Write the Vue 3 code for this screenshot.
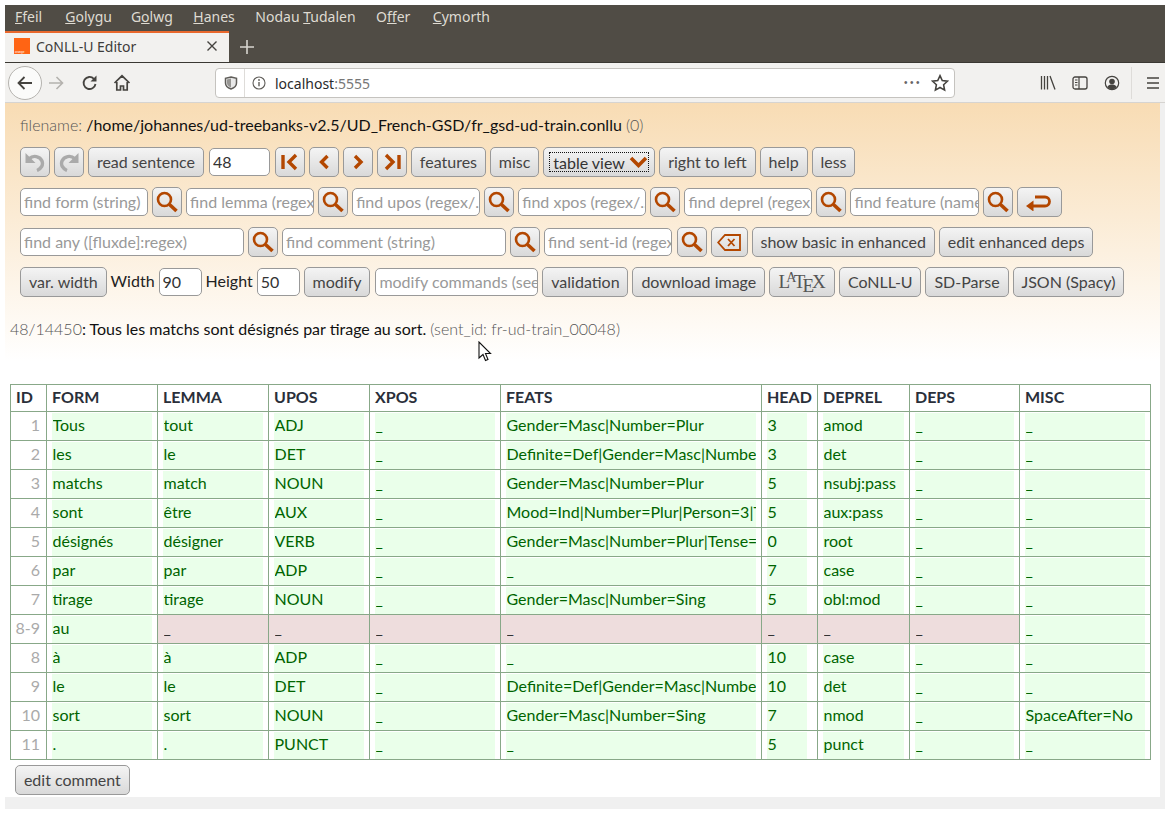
<script setup>
const headers = ['ID', 'FORM', 'LEMMA', 'UPOS', 'XPOS', 'FEATS', 'HEAD', 'DEPREL', 'DEPS', 'MISC']
const widths = [36, 111, 111, 101, 131, 261, 56, 92, 110, 131]
const rows = [
  ['1', 'Tous', 'tout', 'ADJ', '_', 'Gender=Masc|Number=Plur', '3', 'amod', '_', '_'],
  ['2', 'les', 'le', 'DET', '_', 'Definite=Def|Gender=Masc|Number=Plur|PronType=Art', '3', 'det', '_', '_'],
  ['3', 'matchs', 'match', 'NOUN', '_', 'Gender=Masc|Number=Plur', '5', 'nsubj:pass', '_', '_'],
  ['4', 'sont', 'être', 'AUX', '_', 'Mood=Ind|Number=Plur|Person=3|Tense=Pres|VerbForm=Fin', '5', 'aux:pass', '_', '_'],
  ['5', 'désignés', 'désigner', 'VERB', '_', 'Gender=Masc|Number=Plur|Tense=Past|VerbForm=Part|Voice=Pass', '0', 'root', '_', '_'],
  ['6', 'par', 'par', 'ADP', '_', '_', '7', 'case', '_', '_'],
  ['7', 'tirage', 'tirage', 'NOUN', '_', 'Gender=Masc|Number=Sing', '5', 'obl:mod', '_', '_'],
  ['8-9', 'au', '_', '_', '_', '_', '_', '_', '_', '_'],
  ['8', 'à', 'à', 'ADP', '_', '_', '10', 'case', '_', '_'],
  ['9', 'le', 'le', 'DET', '_', 'Definite=Def|Gender=Masc|Number=Plur|PronType=Art', '10', 'det', '_', '_'],
  ['10', 'sort', 'sort', 'NOUN', '_', 'Gender=Masc|Number=Sing', '7', 'nmod', '_', 'SpaceAfter=No'],
  ['11', '.', '.', 'PUNCT', '_', '_', '5', 'punct', '_', '_'],
]
function isPink(row, i) {
  return row[0] === '8-9' && i >= 2 && i <= 8
}
</script>

<template>
  <div class="window">
    <div class="menubar">
      <span class="mi"><u>F</u>feil</span>
      <span class="mi"><u>G</u>olygu</span>
      <span class="mi">G<u>o</u>lwg</span>
      <span class="mi"><u>H</u>anes</span>
      <span class="mi">Nodau <u>T</u>udalen</span>
      <span class="mi">O<u>f</u>fer</span>
      <span class="mi"><u>C</u>ymorth</span>
    </div>

    <div class="tabbar">
      <div class="tab">
        <svg class="favicon" width="16" height="16" viewBox="0 0 16 16">
          <rect width="16" height="16" fill="#ff6414" />
          <text x="1" y="14.5" font-size="3" fill="#fff" font-family="Liberation Sans">orange</text>
        </svg>
        <span class="tabtitle">CoNLL-U Editor</span>
        <svg class="tabclose" width="12" height="12" viewBox="0 0 12 12">
          <path d="M1.5 1.5l9 9M10.5 1.5l-9 9" stroke="#45433f" stroke-width="1.4" fill="none" />
        </svg>
      </div>
      <svg class="newtab" width="16" height="16" viewBox="0 0 16 16">
        <path d="M8 1v14M1 8h14" stroke="#d8d5cf" stroke-width="1.6" fill="none" />
      </svg>
    </div>

    <div class="toolbar">
      <div class="backbtn">
        <svg width="18" height="18" viewBox="0 0 18 18">
          <path d="M16 9H3M8.5 3L2.500 9l6 6" stroke="#45433f" stroke-width="1.800" fill="none" />
        </svg>
      </div>
      <svg class="tool fwd" width="18" height="18" viewBox="0 0 18 18">
        <path d="M2 9h13M9.500 3l6 6-6 6" stroke="#b4b2ae" stroke-width="1.600" fill="none" />
      </svg>
      <svg class="tool reload" width="18" height="18" viewBox="0 0 18 18">
        <path d="M14.500 10a6 6 0 1 1-1.600-5.200" stroke="#45433f" stroke-width="1.800" fill="none" />
        <path d="M15.500 1.500v6h-6z" fill="#45433f" />
      </svg>
      <svg class="tool home" width="18" height="18" viewBox="0 0 18 18">
        <path d="M1.500 9L9 1.800 16.500 9M3.800 8v8h3.700v-4h3v4h3.700V8" stroke="#45433f" stroke-width="1.700" fill="none" />
      </svg>
      <div class="urlbar">
        <svg class="shield" width="14" height="14" viewBox="0 0 14 14">
          <path d="M7 1l5.500 1.300V7c0 3-2.400 5-5.500 6C3.900 12 1.500 10 1.500 7V2.300z" stroke="#5f5d59" stroke-width="1.500" fill="#e8e8e8" />
          <path d="M7 2.500V11.500C4.800 10.800 3 9.300 3 7V3.400z" fill="#5f5d59" opacity=".6" />
        </svg>
        <span class="urlsep"></span>
        <svg class="info" width="14" height="14" viewBox="0 0 14 14">
          <circle cx="7" cy="7" r="6" stroke="#5f5d59" stroke-width="1.100" fill="none" />
          <path d="M7 6v4.200" stroke="#5f5d59" stroke-width="1.400" />
          <circle cx="7" cy="4" r=".9" fill="#5f5d59" />
        </svg>
        <span class="host">localhost<span class="port">:5555</span></span>
        <span class="dots">•••</span>
        <svg class="star" width="18" height="18" viewBox="0 0 16 16">
          <path d="M8 1.500l2 4.300 4.600.6-3.400 3.200.9 4.700L8 12l-4.100 2.300.9-4.700L1.400 6.400 6 5.800z" stroke="#45433f" stroke-width="1.400" fill="none" />
        </svg>
      </div>
      <div class="righttools">
        <svg width="16" height="16" viewBox="0 0 16 16">
          <path d="M1.500 1v13.500M4.500 1v13.500M7.500 1v13.500M10 1l5 13.500" stroke="#45433f" stroke-width="1.300" fill="none" />
        </svg>
        <svg width="16" height="16" viewBox="0 0 16 16">
          <rect x="1" y="2" width="14" height="12" rx="2" stroke="#45433f" stroke-width="1.300" fill="none" />
          <path d="M7 2v12M3 5h2.500M3 7.500h2.500M3 10h2.500" stroke="#45433f" stroke-width="1.200" />
        </svg>
        <svg width="16" height="16" viewBox="0 0 16 16">
          <circle cx="8" cy="8" r="6.700" stroke="#45433f" stroke-width="1.200" fill="none" />
          <circle cx="8" cy="6.500" r="2.800" fill="#45433f" />
          <path d="M3.300 12c1-2 3-2.500 4.700-2.500s3.700.5 4.700 2.500a6 6 0 0 1-9.400 0z" fill="#45433f" />
        </svg>
        <span class="toolsep"></span>
        <svg class="burger" width="14" height="14" viewBox="0 0 14 14">
          <path d="M1 2h12M1 7h12M1 12h12" stroke="#45433f" stroke-width="1.500" fill="none" />
        </svg>
      </div>
    </div>

    <div class="viewport">
      <div class="page">
        <div class="head">
          <div class="filename"><span class="dim">filename:</span> /home/johannes/ud-treebanks-v2.5/UD_French-GSD/fr_gsd-ud-train.conllu <span class="dim">(0)</span></div>

          <div class="row">
            <button class="btn icon">
              <svg width="22" height="20" viewBox="0 0 22 20"><path d="M1.500 1v10h10z" fill="#aaa" /><path d="M5.500 6.500C9 3 16 4 18 9c1.500 4-1 8-5 9.500" stroke="#aaa" stroke-width="3.400" fill="none" /></svg>
            </button>
            <button class="btn icon">
              <svg width="22" height="20" viewBox="0 0 22 20"><path d="M20.500 1v10h-10z" fill="#aaa" /><path d="M16.500 6.500C13 3 6 4 4 9c-1.500 4 1 8 5 9.500" stroke="#aaa" stroke-width="3.400" fill="none" /></svg>
            </button>
            <button class="btn">read sentence</button>
            <input class="field num48" value="48" />
            <button class="btn icon">
              <svg width="20" height="18" viewBox="0 0 20 18"><path d="M3 2v14" stroke="#b34700" stroke-width="3.400" fill="none" /><path d="M16 2L9 9l7 7" stroke="#b34700" stroke-width="3.400" fill="none" /></svg>
            </button>
            <button class="btn icon">
              <svg width="20" height="18" viewBox="0 0 20 18"><path d="M13.500 3l-6 6 6 6" stroke="#b34700" stroke-width="3.400" fill="none" /></svg>
            </button>
            <button class="btn icon">
              <svg width="20" height="18" viewBox="0 0 20 18"><path d="M7 3l6 6-6 6" stroke="#b34700" stroke-width="3.400" fill="none" /></svg>
            </button>
            <button class="btn icon">
              <svg width="20" height="18" viewBox="0 0 20 18"><path d="M4 2l7 7-7 7" stroke="#b34700" stroke-width="3.400" fill="none" /><path d="M17 2v14" stroke="#b34700" stroke-width="3.400" fill="none" /></svg>
            </button>
            <button class="btn">features</button>
            <button class="btn">misc</button>
            <button class="btn selectbtn">
              <span class="focusbox">table view
                <svg width="19" height="12" viewBox="0 0 19 12"><path d="M2 2l7.500 7.500L17 2" stroke="#b34700" stroke-width="3.600" fill="none" /></svg>
              </span>
            </button>
            <button class="btn">right to left</button>
            <button class="btn">help</button>
            <button class="btn">less</button>
          </div>

          <div class="row">
            <template v-for="p in ['find form (string)', 'find lemma (regex/...)', 'find upos (regex/...)', 'find xpos (regex/...)', 'find deprel (regex/...)', 'find feature (name=...)']" :key="p">
              <input class="field find" :placeholder="p" />
              <button class="btn icon">
                <svg width="24" height="24" viewBox="0 0 24 24"><circle cx="9.500" cy="9.500" r="6.500" stroke="#b34700" stroke-width="2.600" fill="none" /><path d="M14.500 14.500l7 6.500" stroke="#b34700" stroke-width="3.600" fill="none" /></svg>
              </button>
            </template>
            <button class="btn returnbtn">
              <svg width="28" height="18" viewBox="0 0 28 18"><path d="M6.500 13H20a4.500 4.500 0 0 0 0-9H10" stroke="#b34700" stroke-width="2.800" fill="none" /><path d="M1 13l7.500-5.500v11z" fill="#b34700" /></svg>
            </button>
          </div>

          <div class="row">
            <input class="field wide" placeholder="find any ([fluxde]:regex)" />
            <button class="btn icon">
              <svg width="24" height="24" viewBox="0 0 24 24"><circle cx="9.500" cy="9.500" r="6.500" stroke="#b34700" stroke-width="2.600" fill="none" /><path d="M14.500 14.500l7 6.500" stroke="#b34700" stroke-width="3.600" fill="none" /></svg>
            </button>
            <input class="field wide" placeholder="find comment (string)" />
            <button class="btn icon">
              <svg width="24" height="24" viewBox="0 0 24 24"><circle cx="9.500" cy="9.500" r="6.500" stroke="#b34700" stroke-width="2.600" fill="none" /><path d="M14.500 14.500l7 6.500" stroke="#b34700" stroke-width="3.600" fill="none" /></svg>
            </button>
            <input class="field find" placeholder="find sent-id (regex/...)" />
            <button class="btn icon gapl">
              <svg width="24" height="24" viewBox="0 0 24 24"><circle cx="9.500" cy="9.500" r="6.500" stroke="#b34700" stroke-width="2.600" fill="none" /><path d="M14.500 14.500l7 6.500" stroke="#b34700" stroke-width="3.600" fill="none" /></svg>
            </button>
            <button class="btn clearbtn">
              <svg width="24" height="17" viewBox="0 0 24 17"><path d="M8 1h15v15H8L1.200 8.500z" stroke="#b34700" stroke-width="1.800" fill="none" /><path d="M11 5l6.500 7M17.500 5L11 12" stroke="#b34700" stroke-width="1.800" fill="none" /></svg>
            </button>
            <button class="btn">show basic in enhanced</button>
            <button class="btn">edit enhanced deps</button>
          </div>

          <div class="row">
            <button class="btn">var. width</button>
            <span class="lbl">Width</span>
            <input class="field small" value="90" />
            <span class="lbl">Height</span>
            <input class="field small" value="50" />
            <button class="btn">modify</button>
            <input class="field cmd" placeholder="modify commands (see help)" />
            <button class="btn">validation</button>
            <button class="btn">download image</button>
            <button class="btn latex">L<span class="la">A</span>T<span class="le">E</span>X</button>
            <button class="btn">CoNLL-U</button>
            <button class="btn">SD-Parse</button>
            <button class="btn">JSON (Spacy)</button>
          </div>

          <div class="sentence"><span class="dim">48/14450</span>: Tous les matchs sont désignés par tirage au sort. <span class="dim">(sent_id: fr-ud-train_00048)</span></div>

          <svg class="cursor" width="14" height="21" viewBox="0 0 14 21">
            <path d="M1 1v16l4-3.500 2.500 6 2.500-1-2.500-6h5z" fill="#fff" stroke="#111" stroke-width="1.100" />
          </svg>
        </div>

        <table class="tbl">
          <colgroup>
            <col v-for="(w, i) in widths" :key="i" :style="{ width: w + 'px' }" />
          </colgroup>
          <thead>
            <tr><th v-for="h in headers" :key="h">{{ h }}</th></tr>
          </thead>
          <tbody>
            <tr v-for="r in rows" :key="r[0]">
              <td class="idc">{{ r[0] }}</td>
              <td v-for="(c, i) in r.slice(1)" :key="i" :class="{ headc: i === 5, pinkc: isPink(r, i + 1) }">
                <input class="cell" :class="{ pink: isPink(r, i + 1) }" :value="c" readonly />
              </td>
            </tr>
          </tbody>
        </table>

        <button class="btn editc">edit comment</button>
      </div>
      <div class="vscroll"></div>
    </div>
    <div class="hscroll"></div>
  </div>
</template>

<style>
html, body { margin: 0; background: #fff; }
</style>

<style scoped>
.window {
  width: 1160px;
  height: 804px;
  margin: 5px 0 0 5px;
  display: flex;
  flex-direction: column;
  font-family: Lato, "Liberation Sans", sans-serif;
  overflow: hidden;
}
.menubar {
  height: 26px;
  box-sizing: border-box;
  padding: 0 0 3px 10px;
  background: #504c45;
  display: flex;
  align-items: center;
  gap: 20.500px;
  font-family: "Noto Sans", sans-serif;
  font-size: 14px;
  color: #dfdbd2;
  flex: none;
}
.mi:first-child { margin-right: 2.500px; }
.mi:nth-child(2) { margin-right: -1.500px; }
.mi:nth-child(6) { margin-right: 2px; }
.tabbar {
  height: 32px;
  background: #504c45;
  display: flex;
  align-items: center;
  flex: none;
  border-bottom: 1px solid #3a3833;
  box-sizing: border-box;
}
.tab {
  width: 224px;
  height: 31px;
  box-sizing: border-box;
  background: #f2f1ef;
  border-top: 2px solid #e9682d;
  display: flex;
  align-items: center;
  padding: 0 11px 3px 9px;
  align-self: flex-start;
}
.favicon { flex: none; }
.tabtitle {
  margin-left: 6px;
  flex: 1;
  font-family: "Noto Sans", sans-serif;
  font-size: 14px;
  color: #3d3c3a;
}
.newtab { margin-left: 10px; }
.toolbar {
  height: 40px;
  box-sizing: border-box;
  background: #f2f1ef;
  border-bottom: 1px solid #d6d4d1;
  display: flex;
  align-items: center;
  flex: none;
  padding-left: 3px;
}
.backbtn {
  width: 34px;
  height: 34px;
  box-sizing: border-box;
  border: 1px solid #b5b3af;
  border-radius: 50%;
  background: #fbfbfa;
  display: flex;
  align-items: center;
  justify-content: center;
  flex: none;
}
.tool { flex: none; }
.fwd { margin-left: 5px; }
.reload { margin-left: 16px; }
.home { margin-left: 14px; }
.urlbar {
  width: 740px;
  height: 30px;
  margin-left: 84px;
  box-sizing: border-box;
  background: #fff;
  border: 1px solid #c5c3bf;
  border-radius: 4px;
  display: flex;
  align-items: center;
  padding-left: 8px;
  flex: none;
}
.urlsep { width: 1px; height: 28px; background: #dedcd9; margin-left: 6px; }
.info { margin-left: 7px; }
.host {
  margin-left: 9px;
  flex: 1;
  font-family: "Noto Sans", sans-serif;
  font-size: 14px;
  color: #2a2a2a;
  position: relative;
  top: 1px;
}
.port { color: #777; }
.dots { font-size: 10px; color: #666; letter-spacing: 2.500px; margin-right: 9px; font-family: "Liberation Sans", sans-serif; }
.star { margin-right: 5px; }
.righttools {
  display: flex;
  align-items: center;
  margin-left: 85px;
  gap: 16px;
}
.toolsep { width: 1px; height: 32px; background: #dedcd9; margin-left: -5px; }
.burger { margin-left: -2px; }
.viewport {
  flex: 1;
  display: flex;
  min-height: 0;
}
.page {
  width: 1155px;
  background: #fff;
  position: relative;
}
.vscroll {
  width: 5px;
  background: #f0f0f0;
}
.hscroll {
  height: 12px;
  background: #f0f0f0;
  flex: none;
}
.head {
  height: 258px;
  box-sizing: border-box;
  padding: 13px 0 0 15px;
  background: linear-gradient(#f8dcb4, #fff);
  position: relative;
}
.filename {
  font-size: 16px;
  line-height: 18px;
  padding-bottom: 3px;
  color: #111;
}
.dim { color: #555; font-weight: 300; }
.row {
  display: flex;
  align-items: center;
  gap: 4px;
  height: 30px;
  margin-top: 10px;
}
.btn {
  height: 30px;
  box-sizing: border-box;
  border: 1px solid #999;
  border-radius: 5px;
  background: linear-gradient(#f4f4f4, #d9d9d9);
  font-family: Lato, "Liberation Sans", sans-serif;
  font-size: 16px;
  color: #444;
  padding: 0 7.900px 1px;
  flex: none;
  display: flex;
  align-items: center;
  justify-content: center;
}
.icon { width: 30px; padding: 0; }
.gapl { margin-left: 0.500px; }
.returnbtn { width: 45px; padding: 0; }
.clearbtn { width: 37px; padding: 0; }
.selectbtn { width: 112px; padding: 0; }
.focusbox {
  border: 1px dotted #111;
  width: 100px;
  height: 20px;
  box-sizing: border-box;
  display: flex;
  align-items: center;
  justify-content: space-between;
  padding: 0 0 0 3px;
  color: #333;
}
.field {
  height: 28px;
  box-sizing: border-box;
  border: 1px solid #999;
  border-radius: 5px;
  background: #fff;
  font-family: Lato, "Liberation Sans", sans-serif;
  font-size: 16px;
  color: #333;
  padding: 0 0 1px 3px;
  flex: none;
  outline: none;
}
.field::placeholder { color: #999; opacity: 1; }
.num48 { width: 61px; margin: 0 1px; }
.find { width: 128.100px; }
.wide { width: 224px; }
.small { width: 43px; }
.cmd { width: 163px; margin-left: 1px; }
.lbl { font-size: 16px; color: #222; position: relative; top: -2px; }
.latex { font-family: "Liberation Serif", serif; font-size: 19px; padding: 0; width: 66px; color: #555; }
.la { font-size: 14px; position: relative; top: -4px; margin: 0 -2.500px 0 -4px; }
.le { position: relative; top: 4px; margin: 0 -2px 0 -3px; }
.sentence {
  margin-top: 23px;
  font-size: 16px;
  line-height: 18px;
  margin-left: -10px;
  color: #111;
}
.cursor {
  position: absolute;
  left: 473px;
  top: 238px;
}
.tbl {
  margin: 23px 0 0 5px;
  border-collapse: collapse;
  table-layout: fixed;
  width: 1140px;
  font-size: 16px;
}
.tbl th, .tbl td {
  border: 1px solid #88a888;
  box-sizing: border-box;
}
.tbl th {
  height: 27px;
  text-align: left;
  padding: 0 0 3px 5px;
  font-weight: 700;
  font-size: 16px;
  color: #2a2f3a;
  overflow: hidden;
  white-space: nowrap;
}
.tbl td {
  height: 29px;
  padding: 0 5px;
}
.tbl .idc {
  text-align: right;
  color: #aaa;
  padding: 0 6px 3px 0;
}
.tbl .headc { padding-right: 10px; }
.tbl .pinkc { background: #eedddd; }
.cell {
  display: block;
  width: 100%;
  height: 27px;
  box-sizing: border-box;
  border: 0;
  padding: 0 0 4px 0.500px;
  margin: 0;
  background: #eaffea;
  color: #006400;
  font-family: Lato, "Liberation Sans", sans-serif;
  font-size: 16px;
  outline: none;
}
.pink { background: #eedddd; color: #333; }
.editc { margin: 5px 0 0 10px; }
</style>
